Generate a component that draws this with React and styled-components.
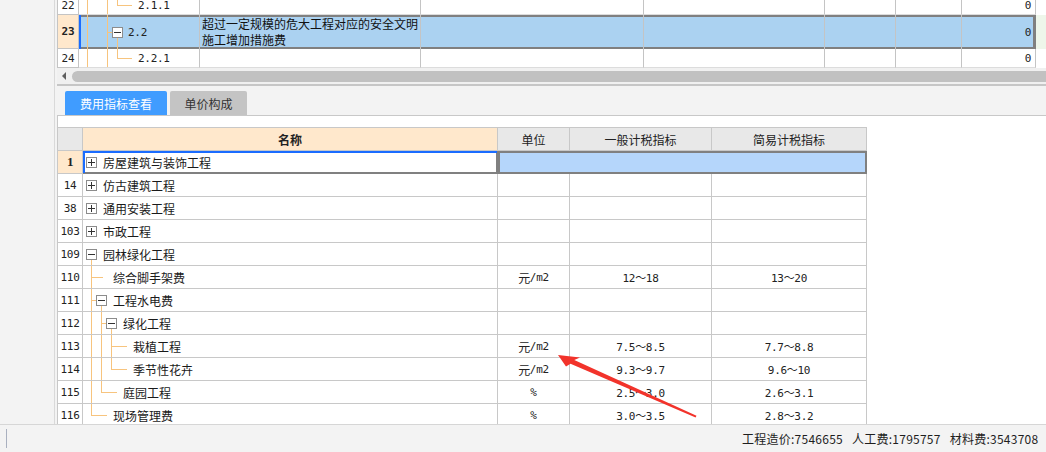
import React from 'react';
import styled, { createGlobalStyle } from 'styled-components';

const CJK = `"Noto Sans CJK SC", "Noto Sans", sans-serif`;
const MONO = `"DejaVu Sans Mono", "Liberation Mono", "Noto Sans CJK SC", monospace`;
const ORANGE = '#f7c47e';

const GlobalStyle = createGlobalStyle`
  html, body { margin: 0; padding: 0; }
  body {
    width: 1046px; height: 452px; overflow: hidden;
    background: #f3f3f3;
    font-family: ${CJK};
    font-size: 12px;
    color: #222;
  }
  #root { width: 1046px; height: 452px; }
`;

const Page = styled.div`
  position: relative;
  width: 1046px;
  height: 452px;
  display: flex;
  flex-direction: column;
  background: #f3f3f3;
  overflow: hidden;
`;

const Workspace = styled.div`
  flex: 1;
  min-height: 0;
  display: flex;
`;

const SideStrip = styled.div`
  flex: none;
  width: 54px;
  border-right: 1px solid #d9d9d9;
  background: #f3f3f3;
`;

const MainCol = styled.div`
  flex: 1;
  min-width: 0;
  display: flex;
  flex-direction: column;
  padding-left: 2px;
`;

/* ---------- top grid ---------- */
const TopGrid = styled.div`
  flex: none;
  height: 68px;
  overflow: hidden;
  background: #fff;
  border-left: 1px solid #c4c4c4;
`;

const TopRow = styled.div`
  display: grid;
  grid-template-columns: 21px 121px 221px 223px 181px 71px 66px 74px 1fr;
  height: ${p => p.$h}px;
  margin-top: ${p => p.$offset || 0}px;
`;

const TopNum = styled.div`
  display: flex;
  align-items: center;
  justify-content: center;
  font-family: ${MONO};
  font-size: 11px;
  font-weight: ${p => (p.$sel ? 700 : 400)};
  color: #222;
  background: ${p => (p.$sel ? '#ffe8cc' : '#fff')};
  border-right: 1px solid #c4c4c4;
  border-bottom: 1px solid #c4c4c4;
`;

const selShadow = p => {
  if (!p.$sel) return 'none';
  const s = ['inset 0 2px 0 #808080', 'inset 0 -2px 0 #808080'];
  if (p.$first) s.unshift('inset 2px 0 0 #1a6cff');
  if (p.$last) s.unshift('inset -2px 0 0 #808080');
  return s.join(', ');
};

const TopCell = styled.div`
  display: flex;
  align-items: center;
  justify-content: ${p => (p.$right ? 'flex-end' : 'flex-start')};
  min-width: 0;
  overflow: hidden;
  padding-right: ${p => (p.$right ? 4 : 0)}px;
  padding-left: ${p => (p.$pad ? 2 : 0)}px;
  border-right: 1px solid ${p => (p.$last && p.$sel ? '#808080' : '#c4c4c4')};
  border-bottom: ${p => (p.$sel ? 'none' : '1px solid #dcdcdc')};
  background: ${p => (p.$sel ? '#abd2f1' : '#fff')};
  box-shadow: ${selShadow};
`;

const FillerCell = styled.div`
  background: ${p => (p.$sel ? '#eef6ea' : '#fff')};
`;

const Code = styled.span`
  font-family: ${MONO};
  font-size: 11px;
  letter-spacing: -0.3px;
  color: #222;
  margin-left: ${p => p.$gap || 0}px;
  white-space: nowrap;
`;

const TwoLine = styled.div`
  line-height: 16px;
  font-size: 12px;
  color: #111;
`;

/* ---------- scrollbar ---------- */
const HScroll = styled.div`
  flex: none;
  height: 16px;
  display: flex;
  align-items: center;
  gap: 6px;
  padding-left: 5px;
  background: #f0f0f0;
  border-bottom: 2px solid #c6c6c6;
`;

const ScrollArrow = styled.span`
  flex: none;
  width: 0;
  height: 0;
  border-top: 4px solid transparent;
  border-bottom: 4px solid transparent;
  border-right: 4px solid #5f5f5f;
`;

const ScrollThumb = styled.div`
  flex: 1;
  height: 11px;
  background: #c1c1c1;
  border-radius: 6px 0 0 6px;
  margin-right: -10px;
`;

/* ---------- tabs ---------- */
const TabBar = styled.div`
  flex: none;
  display: flex;
  gap: 3px;
  margin-top: 5px;
  padding-left: 8px;
  height: 24px;
`;

const Tab = styled.div`
  width: ${p => p.$w}px;
  display: flex;
  align-items: center;
  justify-content: center;
  font-size: 12px;
  color: ${p => (p.$active ? '#fff' : '#333')};
  background: ${p => (p.$active ? '#409cff' : '#c4c4c4')};
  border-radius: 2px 2px 0 0;
`;

/* ---------- lower panel ---------- */
const Panel = styled.div`
  flex: 1;
  min-height: 0;
  overflow: hidden;
  background: #fff;
  border-top: 1px solid #c8c8c8;
  border-left: 1px solid #c8c8c8;
  padding-top: 11px;
`;

const Table = styled.div`
  width: 809px;
  border-top: 1px solid #c8c8c8;
`;

const Row = styled.div`
  display: grid;
  grid-template-columns: 25px 415px 72px 142px 155px;
  height: ${p => p.$h || 23}px;
`;

const HeadCell = styled.div`
  display: flex;
  align-items: center;
  justify-content: center;
  font-size: 12px;
  font-weight: ${p => (p.$bold ? 700 : 400)};
  color: #222;
  background: ${p => p.$bg || '#e8e8e8'};
  border-right: 1px solid #c8c8c8;
  border-bottom: 1px solid #c8c8c8;
`;

const NumCell = styled.div`
  display: flex;
  align-items: center;
  justify-content: center;
  font-family: ${p => (p.$sel ? `"Liberation Serif", serif` : MONO)};
  font-size: ${p => (p.$sel ? 13 : 11)}px;
  font-weight: ${p => (p.$sel ? 700 : 400)};
  letter-spacing: -0.3px;
  color: #222;
  background: ${p => (p.$sel ? '#ffe8cc' : '#fff')};
  border-right: 1px solid #c8c8c8;
  border-bottom: 1px solid #c8c8c8;
`;

const NameCell = styled.div`
  display: flex;
  align-items: stretch;
  min-width: 0;
  overflow: hidden;
  white-space: nowrap;
  border-right: 1px solid ${p => (p.$sel ? '#808080' : '#c8c8c8')};
  border-bottom: 1px solid ${p => (p.$sel ? '#808080' : '#c8c8c8')};
  box-shadow: ${p => (p.$sel ? 'inset 2px 2px 0 #1a6cff, inset -1px -1px 0 #808080' : 'none')};
`;

const NameText = styled.span`
  align-self: center;
  font-size: 12px;
  color: #1a1a1a;
`;

const ValCell = styled.div`
  display: flex;
  align-items: center;
  justify-content: center;
  font-family: ${MONO};
  font-size: 11px;
  letter-spacing: -0.3px;
  color: #222;
  white-space: nowrap;
  border-right: 1px solid #c8c8c8;
  border-bottom: 1px solid #c8c8c8;
`;

const SelSpan = styled.div`
  grid-column: span 3;
  background: #b5d6fb;
  border-right: 1px solid #808080;
  border-bottom: 1px solid #808080;
  box-shadow: inset 2px 2px 0 #808080, inset -1px -1px 0 #808080;
`;

const Unit = styled.span`
  font-family: ${CJK};
  font-size: 12px;
`;
const UnitLatin = styled.span`
  font-family: ${MONO};
  font-size: 11px;
  letter-spacing: -0.3px;
`;

/* ---------- status bar ---------- */
const StatusBar = styled.div`
  flex: none;
  height: 27px;
  display: flex;
  align-items: center;
  padding-left: 6px;
  background: #f3f3f3;
  border-top: 1px solid #d6d6d6;
`;

const StatusDivider = styled.span`
  flex: none;
  width: 1px;
  height: 19px;
  background: #a9b0bf;
`;

const StatusInfo = styled.div`
  flex: none;
  display: flex;
  gap: 9px;
  margin-left: 735px;
  white-space: nowrap;
  font-size: 12px;
  color: #1e1e1e;
  letter-spacing: 0.25px;
`;

/* ---------- overlay arrow ---------- */
const ArrowOverlay = styled.svg`
  position: absolute;
  left: 0;
  top: 0;
  pointer-events: none;
`;

const GuideSvg = styled.svg`
  flex: none;
  display: block;
  align-self: center;
`;

function Guides({ w, h, cy, full = [], half = [], hl, box }) {
  return (
    <GuideSvg width={w} height={h} viewBox={`0 0 ${w} ${h}`} shapeRendering="crispEdges">
      {full.map(x => (
        <line key={`f${x}`} x1={x + 0.5} x2={x + 0.5} y1={0} y2={h} stroke={ORANGE} />
      ))}
      {half.map(x => (
        <line key={`h${x}`} x1={x + 0.5} x2={x + 0.5} y1={0} y2={cy + 1} stroke={ORANGE} />
      ))}
      {hl && <line x1={hl[0]} x2={hl[1]} y1={cy + 0.5} y2={cy + 0.5} stroke={ORANGE} />}
      {box && (
        <g>
          {box.down && (
            <line x1={box.x + 0.5} x2={box.x + 0.5} y1={cy + 6} y2={h} stroke={ORANGE} />
          )}
          <rect x={box.x - 5 + 0.5} y={cy - 5 + 0.5} width={10} height={10} fill="#fff" stroke="#8c8c8c" />
          <line x1={box.x - 3} x2={box.x + 4} y1={cy + 0.5} y2={cy + 0.5} stroke="#333" />
          {box.plus && (
            <line x1={box.x + 0.5} x2={box.x + 0.5} y1={cy - 3} y2={cy + 4} stroke="#333" />
          )}
        </g>
      )}
    </GuideSvg>
  );
}

const rows = [
  { no: '1', name: '房屋建筑与装饰工程', g: { w: 20, box: { x: 8, plus: true } }, sel: true },
  { no: '14', name: '仿古建筑工程', g: { w: 20, box: { x: 8, plus: true } } },
  { no: '38', name: '通用安装工程', g: { w: 20, box: { x: 8, plus: true } } },
  { no: '103', name: '市政工程', g: { w: 20, box: { x: 8, plus: true } } },
  { no: '109', name: '园林绿化工程', g: { w: 20, box: { x: 8, down: true } } },
  { no: '110', name: '综合脚手架费', g: { w: 30, full: [8], hl: [8, 20] }, unit: ['元', '/m2'], a: '12～18', b: '13～20' },
  { no: '111', name: '工程水电费', g: { w: 30, full: [8], hl: [8, 13], box: { x: 18, down: true } } },
  { no: '112', name: '绿化工程', g: { w: 40, full: [8, 18], hl: [18, 23], box: { x: 28, down: true } } },
  { no: '113', name: '栽植工程', g: { w: 50, full: [8, 18, 28], hl: [28, 44] }, unit: ['元', '/m2'], a: '7.5～8.5', b: '7.7～8.8' },
  { no: '114', name: '季节性花卉', g: { w: 50, full: [8, 18], half: [28], hl: [28, 44] }, unit: ['元', '/m2'], a: '9.3～9.7', b: '9.6～10' },
  { no: '115', name: '庭园工程', g: { w: 40, full: [8], half: [18], hl: [18, 34] }, unit: ['', '%'], a: '2.5～3.0', b: '2.6～3.1' },
  { no: '116', name: '现场管理费', g: { w: 30, half: [8], hl: [8, 24] }, unit: ['', '%'], a: '3.0～3.5', b: '2.8～3.2' },
];

function TopRowView({ num, h, offset, sel, guide, code, codeGap, name }) {
  const gh = sel ? h : h - 1;
  const cy = Math.floor(gh / 2);
  return (
    <TopRow $h={h} $offset={offset}>
      <TopNum $sel={sel}>{num}</TopNum>
      <TopCell $sel={sel} $first>
        <Guides {...guide} h={gh} cy={cy} />
        <Code $gap={codeGap}>{code}</Code>
      </TopCell>
      <TopCell $sel={sel} $pad>{name}</TopCell>
      <TopCell $sel={sel} />
      <TopCell $sel={sel} />
      <TopCell $sel={sel} />
      <TopCell $sel={sel} />
      <TopCell $sel={sel} $last $right>
        <Code>0</Code>
      </TopCell>
      <FillerCell $sel={sel} />
    </TopRow>
  );
}

export default function App() {
  return (
    <Page>
      <GlobalStyle />
      <Workspace>
        <SideStrip />
        <MainCol>
          <TopGrid>
            <TopRowView
              num="22"
              h={19}
              offset={-4}
              guide={{ w: 59, full: [8, 28], half: [38], hl: [38, 53] }}
              code="2.1.1"
            />
            <TopRowView
              num="23"
              h={34}
              sel
              guide={{ w: 48, full: [8, 28], hl: [28, 33], box: { x: 38, down: true } }}
              code="2.2"
              codeGap={1}
              name={
                <TwoLine>
                  超过一定规模的危大工程对应的安全文明
                  <br />
                  施工增加措施费
                </TwoLine>
              }
            />
            <TopRowView
              num="24"
              h={19}
              guide={{ w: 59, full: [8, 28], half: [38], hl: [38, 53] }}
              code="2.2.1"
            />
          </TopGrid>

          <HScroll>
            <ScrollArrow />
            <ScrollThumb />
          </HScroll>

          <TabBar>
            <Tab $active $w={102}>费用指标查看</Tab>
            <Tab $w={77}>单价构成</Tab>
          </TabBar>

          <Panel>
            <Table>
              <Row>
                <HeadCell />
                <HeadCell $bg="#ffe8cc" $bold>名称</HeadCell>
                <HeadCell>单位</HeadCell>
                <HeadCell>一般计税指标</HeadCell>
                <HeadCell>简易计税指标</HeadCell>
              </Row>
              {rows.map(r => (
                <Row key={r.no}>
                  <NumCell $sel={r.sel}>{r.no}</NumCell>
                  <NameCell $sel={r.sel}>
                    <Guides {...r.g} h={22} cy={11} />
                    <NameText>{r.name}</NameText>
                  </NameCell>
                  {r.sel ? (
                    <SelSpan />
                  ) : (
                    <>
                      <ValCell>
                        {r.unit && (
                          <>
                            <Unit>{r.unit[0]}</Unit>
                            <UnitLatin>{r.unit[1]}</UnitLatin>
                          </>
                        )}
                      </ValCell>
                      <ValCell>{r.a}</ValCell>
                      <ValCell>{r.b}</ValCell>
                    </>
                  )}
                </Row>
              ))}
            </Table>
          </Panel>
        </MainCol>
      </Workspace>

      <StatusBar>
        <StatusDivider />
        <StatusInfo>
          <span>工程造价:7546655</span>
          <span>人工费:1795757</span>
          <span>材料费:3543708</span>
          <span>机械费:0</span>
        </StatusInfo>
      </StatusBar>

      <ArrowOverlay width="1046" height="452" viewBox="0 0 1046 452">
        <polygon
          points="558,355 580,357.5 574.3,360.1 696.5,415.8 695.6,417.4 570.5,363.8 566,366.5"
          fill="#f2332b"
        />
      </ArrowOverlay>
    </Page>
  );
}
